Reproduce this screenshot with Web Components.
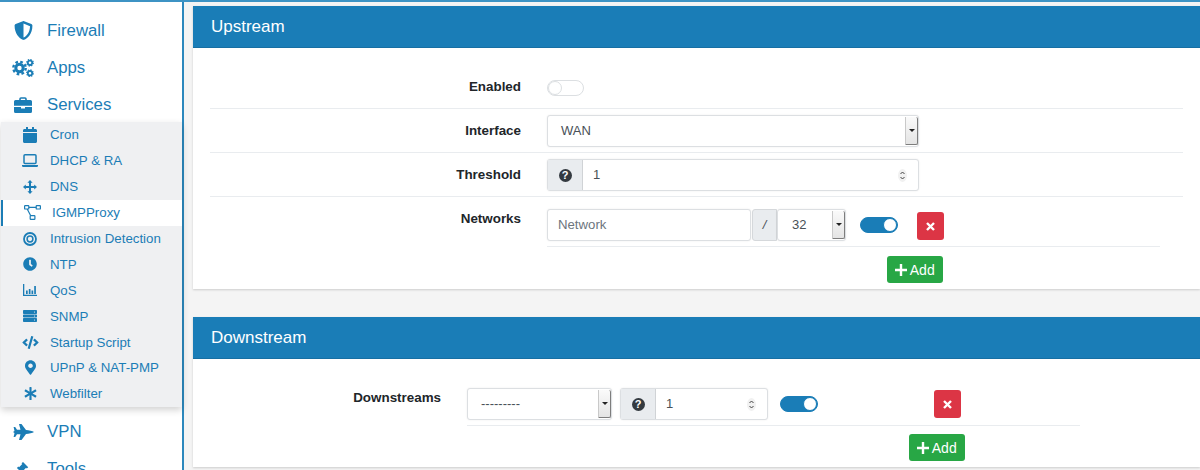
<!DOCTYPE html>
<html>
<head>
<meta charset="utf-8">
<title>IGMPProxy</title>
<style>
  html, body { margin: 0; height: 470px; overflow: hidden; background: #f4f4f4; }
  body { font-family: "Liberation Sans", Arial, sans-serif; color: #212529; }
</style>
</head>
<body>
<app-frame>
  <side-nav slot="side">
    <nav-item icon="shield" label="Firewall"></nav-item>
    <nav-item icon="cogs" label="Apps"></nav-item>
    <nav-item icon="briefcase" label="Services"></nav-item>
    <sub-menu>
      <sub-item icon="calendar" label="Cron"></sub-item>
      <sub-item icon="laptop" label="DHCP &amp; RA"></sub-item>
      <sub-item icon="arrows" label="DNS"></sub-item>
      <sub-item icon="diagram" label="IGMPProxy" active></sub-item>
      <sub-item icon="bullseye" label="Intrusion Detection"></sub-item>
      <sub-item icon="clock" label="NTP"></sub-item>
      <sub-item icon="chart" label="QoS"></sub-item>
      <sub-item icon="server" label="SNMP"></sub-item>
      <sub-item icon="code" label="Startup Script"></sub-item>
      <sub-item icon="marker" label="UPnP &amp; NAT-PMP"></sub-item>
      <sub-item icon="asterisk" label="Webfilter"></sub-item>
    </sub-menu>
    <nav-item icon="jet" label="VPN" style="margin-top:7px"></nav-item>
    <nav-item icon="gavel" label="Tools"></nav-item>
  </side-nav>

  <panel-card title="Upstream" style="--label:311px; height:283px">
    <form-row label="Enabled"><on-off style="width:37px; margin-top:0"></on-off></form-row>
    <form-row label="Interface"><select-box value="WAN" style="width:372px"></select-box></form-row>
    <form-row label="Threshold">
      <help-number value="1" style="width:372px"></help-number>
    </form-row>
    <form-row label="Networks" repeat style="--top:12px">
      <repeat-line>
        <text-box placeholder="Network" style="width:204px"></text-box>
        <slash-addon></slash-addon>
        <select-box value="32" pad="14" style="width:69px"></select-box>
        <on-off checked style="margin-left:14px"></on-off>
        <round-button kind="del" style="margin:3px 0 0 19px"></round-button>
      </repeat-line>
      <round-button kind="add" style="margin:9px 0 0 340px"></round-button>
    </form-row>
  </panel-card>

  <panel-card title="Downstream" style="--label:231px; height:150px; margin-top:28px">
    <form-row label="Downstreams" repeat>
      <repeat-line>
        <select-box value="---------" style="width:145px; font-size:13px"></select-box>
        <help-number value="1" style="width:148px; margin-left:8px"></help-number>
        <on-off checked style="margin-left:12px"></on-off>
        <round-button kind="del" style="margin:2px 0 0 116px"></round-button>
      </repeat-line>
      <round-button kind="add" style="margin:8px 0 0 442px"></round-button>
    </form-row>
  </panel-card>
</app-frame>

<script>
// font awesome style icons, drawn by hand where the path got too long
const ICONS = {
  shield: ['0 0 512 512', '<path d="M466.5 83.7l-192-80a48.15 48.15 0 0 0-36.9 0l-192 80C27.7 91.1 16 108.6 16 128c0 198.5 114.5 335.7 221.5 380.3 11.8 4.9 25.1 4.9 36.9 0C360.1 472.6 496 349.3 496 128c0-19.4-11.7-36.9-29.5-44.3zM256.1 446.3l-.1-381 175.9 73.3c-3.3 151.4-82.1 261.1-175.8 307.7z"/>'],
  cogs: ['0 0 22 18', '<g fill="none" stroke="currentColor"><circle cx="7.500" cy="9" r="3.700" stroke-width="3"/><circle cx="7.500" cy="9" r="6.200" stroke-width="2.400" stroke-dasharray="2.600 2.270"/><circle cx="18" cy="3.800" r="2.200" stroke-width="1.800"/><circle cx="18" cy="3.800" r="3.300" stroke-width="1.200" stroke-dasharray="1.300 1.290"/><circle cx="18" cy="14.200" r="2.200" stroke-width="1.800"/><circle cx="18" cy="14.200" r="3.300" stroke-width="1.200" stroke-dasharray="1.300 1.290"/></g>'],
  briefcase: ['0 0 18 16', '<path d="M6 3V2a1 1 0 0 1 1-1h4a1 1 0 0 1 1 1v1" fill="none" stroke="currentColor" stroke-width="1.600"/><path d="M1.500 3h15A1.500 1.500 0 0 1 18 4.500V8.700H0V4.500A1.500 1.500 0 0 1 1.500 3zM0 10h7v1.500h4V10h7v4.500a1.500 1.500 0 0 1-1.500 1.500h-15A1.500 1.500 0 0 1 0 14.500z"/>'],
  calendar: ['0 0 448 512', '<path d="M12 192h424c6.600 0 12 5.400 12 12v260c0 26.500-21.500 48-48 48H48c-26.500 0-48-21.500-48-48V204c0-6.600 5.400-12 12-12zm436-44v-36c0-26.500-21.500-48-48-48h-48V12c0-6.600-5.400-12-12-12h-40c-6.600 0-12 5.400-12 12v52H160V12c0-6.600-5.400-12-12-12h-40c-6.600 0-12 5.400-12 12v52H48C21.500 64 0 85.500 0 112v36c0 6.600 5.400 12 12 12h424c6.600 0 12-5.400 12-12z"/>'],
  laptop: ['0 0 16 13', '<rect x="2" y=".8" width="12" height="8.700" rx="1" fill="none" stroke="currentColor" stroke-width="1.500"/><path d="M0 11h16v.800a1.200 1.200 0 0 1-1.200 1.200H1.200A1.200 1.200 0 0 1 0 11.800z"/>'],
  arrows: ['0 0 14 14', '<path d="M7 0l2.600 2.800H8v3.200h3.200V4.400L14 7l-2.800 2.600V8H8v3.200h1.600L7 14l-2.600-2.800H6V8H2.800v1.600L0 7l2.800-2.600V6H6V2.800H4.400z"/>'],
  diagram: ['0 0 17 15', '<g fill="none" stroke="currentColor" stroke-width="1.200"><rect x=".6" y=".6" width="4.200" height="3.400" rx=".6"/><rect x="12.200" y=".6" width="4.200" height="3.400" rx=".6"/><rect x="6.200" y="10.600" width="4.700" height="3.700" rx=".6"/><path d="M4.800 2.300h7.400M3.200 4l3.400 6.600"/></g>'],
  bullseye: ['0 0 14 14', '<circle cx="7" cy="7" r="6" fill="none" stroke="currentColor" stroke-width="1.800"/><circle cx="7" cy="7" r="2.900" fill="none" stroke="currentColor" stroke-width="1.500"/>'],
  clock: ['0 0 512 512', '<path d="M256,8C119,8,8,119,8,256S119,504,256,504,504,393,504,256,393,8,256,8Zm92.490,313h0l-20,25a16,16,0,0,1-22.490,2.500h0l-67-49.720a40,40,0,0,1-15-31.230V112a16,16,0,0,1,16-16h32a16,16,0,0,1,16,16V256l58,42.500A16,16,0,0,1,348.490,321Z"/>'],
  chart: ['0 0 14 12', '<path d="M0 0h1.300v10.700H14V12H0z"/><path d="M3 6.500h1.700V10H3zM5.800 5h1.700v5H5.800zM8.500 6.500h1.700V10H8.500zM11.200 2h1.700v8h-1.700z"/>'],
  server: ['0 0 14 12', '<path fill-rule="evenodd" d="M.8 0h12.400a.8.8 0 0 1 .8.8v2.400a.8.8 0 0 1-.8.8H.8a.8.8 0 0 1-.8-.8V.8A.8.8 0 0 1 .8 0zm10.700 1.400a.6.600 0 1 0 0 1.200.6.600 0 0 0 0-1.200zM.8 4.400h12.400a.8.8 0 0 1 .8.8v1.600a.8.8 0 0 1-.8.8H.8a.8.8 0 0 1-.8-.8V5.200a.8.8 0 0 1 .8-.8zm10.700 1a.6.600 0 1 0 0 1.200.6.600 0 0 0 0-1.200zM.8 8h12.400a.8.8 0 0 1 .8.8v2.400a.8.8 0 0 1-.8.8H.8a.8.8 0 0 1-.8-.8V8.800A.8.8 0 0 1 .8 8zm10.700 1.400a.6.600 0 1 0 0 1.200.6.600 0 0 0 0-1.200z"/>'],
  code: ['0 0 640 512', '<path d="M278.900 511.500l-61-17.700c-6.400-1.800-10-8.500-8.200-14.900L346.200 8.700c1.800-6.400 8.500-10 14.900-8.200l61 17.700c6.400 1.800 10 8.500 8.200 14.900L293.800 503.300c-1.900 6.400-8.500 10.100-14.900 8.200zm-114-112.200l43.500-46.400c4.600-4.900 4.300-12.700-.8-17.200L117 256l90.600-79.700c5.100-4.500 5.500-12.300.8-17.200l-43.500-46.400c-4.500-4.800-12.100-5.100-17-.5L3.800 247.200c-5.100 4.700-5.100 12.800 0 17.500l144.100 135.100c4.900 4.600 12.500 4.400 17-.5zm327.200.6l144.100-135.100c5.100-4.700 5.100-12.800 0-17.500L492.100 112.100c-4.800-4.500-12.400-4.300-17 .5L431.600 159c-4.600 4.900-4.300 12.700.8 17.200L523 256l-90.600 79.700c-5.100 4.500-5.500 12.300-.8 17.200l43.500 46.400c4.500 4.900 12.100 5.100 17 .6z"/>'],
  marker: ['0 0 384 512', '<path d="M172.268 501.670C26.970 291.031 0 268.413 0 192 0 85.961 85.961 0 192 0s192 85.961 192 192c0 76.413-26.970 99.031-172.268 309.670-9.535 13.774-29.930 13.773-39.464 0zM192 272c44.183 0 80-35.817 80-80s-35.817-80-80-80-80 35.817-80 80 35.817 80 80 80z"/>'],
  asterisk: ['0 0 512 512', '<path d="M478.210 334.093L336 256l142.210-78.093c11.795-6.477 15.961-21.384 9.232-33.037l-19.480-33.741c-6.728-11.653-21.720-15.499-33.227-8.523L296 186.718l3.475-162.204C299.763 11.061 288.937 0 275.480 0h-38.960c-13.456 0-24.283 11.061-23.994 24.514L216 186.718 77.265 102.607c-11.506-6.976-26.499-3.130-33.227 8.523l-19.480 33.741c-6.728 11.653-2.562 26.560 9.233 33.037L176 256 33.790 334.093c-11.795 6.477-15.961 21.384-9.232 33.037l19.480 33.741c6.728 11.653 21.721 15.499 33.227 8.523L216 325.282l-3.475 162.204C212.237 500.939 223.064 512 236.520 512h38.961c13.456 0 24.283-11.061 23.995-24.514L296 325.282l138.735 84.111c11.506 6.976 26.499 3.130 33.227-8.523l19.480-33.741c6.728-11.653 2.563-26.559-9.232-33.036z"/>'],
  jet: ['0 0 21 16', '<path d="M21 8c-1.500-.9-5-1.700-8-2L8.500 0H6l1.500 5.800H4L2.200 3H.6l.9 3.900L0 8l1.500 1.100L.6 13h1.600L4 10.200h3.500L6 16h2.500L13 10c3-.3 6.500-1.100 8-2z"/>'],
  gavel: ['0 0 18 18', '<path d="M8.500 1l5.500 5.500-1.500 1.500-.8-.8-3.400 3.400.8.8-1.500 1.500L2 7.300l1.500-1.500.8.8 3.400-3.400-.8-.8zM10.300 9.800l1.800 1.800-4.800 5.200a1.500 1.500 0 0 1-2.200-2.100z"/><path d="M10 15h8v3h-8z"/>']
};

function iconSvg(name, w, h) {
  const [box, body] = ICONS[name];
  return `<svg viewBox="${box}" width="${w}" height="${h}" fill="currentColor" aria-hidden="true">${body}</svg>`;
}

class AppFrame extends HTMLElement {
  constructor() {
    super();
    this.attachShadow({ mode: 'open' }).innerHTML = `
      <style>
        :host { display: flex; height: 470px; border-top: 2px solid #3d93c4; box-sizing: border-box; overflow: hidden; }
        .side { flex: none; width: 182px; background: #fff; border-right: 2px solid #2c88bd; }
        .main { flex: 1; min-width: 0; padding: 4px 0 0 9px; }
      </style>
      <div class="side"><slot name="side"></slot></div>
      <div class="main"><slot></slot></div>`;
  }
}

class SideNav extends HTMLElement {
  constructor() {
    super();
    this.attachShadow({ mode: 'open' }).innerHTML = `
      <style>:host { display: block; padding-top: 10px; color: #1b7db6; }</style>
      <slot></slot>`;
  }
}

class NavItem extends HTMLElement {
  connectedCallback() {
    const size = { shield: [19, 19], cogs: [22, 18], briefcase: [18, 16], jet: [21, 16], gavel: [17, 17] }[this.getAttribute('icon')];
    this.attachShadow({ mode: 'open' }).innerHTML = `
      <style>
        :host { display: flex; align-items: center; height: 37px; font-size: 16.8px; }
        .i { flex: none; width: 47px; display: flex; justify-content: center; box-sizing: border-box; padding-right: 1px; }
      </style>
      <span class="i">${iconSvg(this.getAttribute('icon'), size[0], size[1])}</span>
      <span>${this.getAttribute('label').replace('&', '&amp;')}</span>`;
  }
}

class SubMenu extends HTMLElement {
  constructor() {
    super();
    this.attachShadow({ mode: 'open' }).innerHTML = `
      <style>
        :host { display: block; position: relative; margin: -1px 0 0 1px; background: #eff0f2; box-shadow: 0 3px 7px rgba(0,0,0,.18); }
      </style>
      <slot></slot>`;
  }
}

class SubItem extends HTMLElement {
  connectedCallback() {
    const size = { calendar: [14, 16], laptop: [16, 13], arrows: [14, 14], diagram: [17, 15], bullseye: [14, 14], clock: [14, 14], chart: [14, 12], server: [14, 12], code: [17, 13], marker: [11, 15], asterisk: [13, 13] }[this.getAttribute('icon')];
    this.attachShadow({ mode: 'open' }).innerHTML = `
      <style>
        :host { display: flex; align-items: center; height: 25.9px; font-size: 13.3px; box-sizing: border-box; }
        :host([active]) { background: #fff; border-left: 2px solid #1b7db6; }
        .i { flex: none; width: 49px; padding: 0 10px 0 19px; box-sizing: border-box; display: flex; justify-content: center; }
      </style>
      <span class="i">${iconSvg(this.getAttribute('icon'), size[0], size[1])}</span>
      <span>${this.getAttribute('label').replace('&', '&amp;')}</span>`;
  }
}

class PanelCard extends HTMLElement {
  connectedCallback() {
    this.attachShadow({ mode: 'open' }).innerHTML = `
      <style>
        :host { display: block; box-sizing: border-box; background: #fff; box-shadow: 0 1px 2px rgba(0,0,0,.16); }
        header { height: 42px; padding-left: 18px; background: #1a7db7; color: #fff; font-size: 17px; line-height: 41px; border-bottom: 1px solid #176fa3; box-sizing: border-box; }
        .body { padding: 16px 17px 0; }
      </style>
      <header>${this.getAttribute('title')}</header>
      <div class="body"><slot></slot></div>`;
    this.removeAttribute('title');
  }
}

class FormRow extends HTMLElement {
  connectedCallback() {
    this.attachShadow({ mode: 'open' }).innerHTML = `
      <style>
        :host { display: grid; grid-template-columns: var(--label) 1fr; column-gap: 26px; min-height: 44px; box-sizing: border-box; padding: 6px 0 4px; border-bottom: 1px solid #e9ecef; }
        :host([repeat]) { border-bottom: 0; padding-top: var(--top, 13px); }
        :host(:first-child:not([repeat])) { padding-top: 0; min-height: 45px; }
        .l { font-size: 13.4px; font-weight: bold; text-align: right; color: #212529; line-height: 16px; margin-top: 8px; }
        :host([repeat]) .l { margin-top: 2px; }
        .c { display: block; min-width: 0; }
        :host(:first-child:not([repeat])) .c { padding-top: 16px; }
        :host(:first-child:not([repeat])) .l { margin-top: 15px; }
      </style>
      <div class="l">${this.getAttribute('label')}</div>
      <div class="c"><slot></slot></div>`;
  }
}

class RepeatLine extends HTMLElement {
  constructor() {
    super();
    this.attachShadow({ mode: 'open' }).innerHTML = `
      <style>:host { display: flex; align-items: flex-start; width: 613px; height: 38px; box-sizing: border-box; border-bottom: 1px solid #e9ecef; }</style>
      <slot></slot>`;
  }
}

class TextBox extends HTMLElement {
  connectedCallback() {
    this.attachShadow({ mode: 'open' }).innerHTML = `
      <style>
        :host { display: block; height: 32px; box-sizing: border-box; flex: none; border: 1px solid #dcdfe2; border-radius: 3px; padding: 0 10px; font-size: 13.2px; line-height: 30px; color: #6c757d; background: #fff; box-shadow: 0 0 2px rgba(0,0,0,.08); }
      </style>${this.getAttribute('placeholder')}`;
  }
}

class SlashAddon extends HTMLElement {
  constructor() {
    super();
    this.attachShadow({ mode: 'open' }).innerHTML = `
      <style>
        :host { display: block; flex: none; width: 25px; height: 32px; box-sizing: border-box; margin-left: 1px; background: #e9ecef; border: 1px solid #d5d8db; border-radius: 3px 0 0 3px; text-align: center; font-size: 13px; line-height: 30px; font-style: italic; color: #495057; }
      </style>/`;
  }
}

class SelectBox extends HTMLElement {
  connectedCallback() {
    const pad = this.getAttribute('pad') || 13;
    this.attachShadow({ mode: 'open' }).innerHTML = `
      <style>
        :host { display: flex; flex: none; height: 32px; box-sizing: border-box; border: 1px solid #dcdfe2; border-radius: 3px; background: #fff; box-shadow: 0 0 2px rgba(0,0,0,.08); font-size: 13px; color: #495057; }
        .v { flex: 1; padding-left: ${pad}px; line-height: 30px; }
        .b { flex: none; width: 11px; margin: 1px 0; background: linear-gradient(#fafafa, #e4e4e4); border-left: 1px solid #c9c9c9; border-right: 1px solid #7d7d7d; border-bottom: 1px solid #7d7d7d; border-radius: 0 2px 2px 0; display: flex; align-items: center; justify-content: center; }
        .b i { width: 0; height: 0; border: 3px solid transparent; border-top: 3px solid #222; border-bottom: 0; }
      </style>
      <span class="v">${this.getAttribute('value')}</span><span class="b"><i></i></span>`;
  }
}

class HelpNumber extends HTMLElement {
  connectedCallback() {
    this.attachShadow({ mode: 'open' }).innerHTML = `
      <style>
        :host { display: flex; flex: none; height: 32px; box-sizing: border-box; border: 1px solid #dcdfe2; border-radius: 3px; background: #fff; box-shadow: 0 0 2px rgba(0,0,0,.08); font-size: 13px; color: #495057; }
        .h { flex: none; width: 34px; background: #e9ecef; border-right: 1px solid #d0d3d6; display: flex; align-items: center; justify-content: center; }
        .q { width: 13px; height: 13px; border-radius: 50%; background: #343a40; color: #fff; font-size: 11px; font-weight: bold; line-height: 13px; text-align: center; }
        .v { flex: 1; padding-left: 10px; line-height: 30px; }
        .s { flex: none; align-self: center; width: 9px; height: 13px; margin-right: 11px; border-radius: 50%; background: #f1f1f1; display: flex; }
      </style>
      <span class="h"><span class="q">?</span></span>
      <span class="v">${this.getAttribute('value')}</span>
      <span class="s"><svg viewBox="0 0 9 13" width="9" height="13" fill="none" stroke="#444" stroke-width="1"><path d="M2.500 5l2-2 2 2M2.500 8l2 2 2-2"/></svg></span>`;
  }
}

class OnOff extends HTMLElement {
  constructor() {
    super();
    this.attachShadow({ mode: 'open' }).innerHTML = `
      <style>
        :host { display: block; flex: none; position: relative; width: 38px; height: 16px; margin-top: 8px; box-sizing: border-box; border-radius: 8px; background: #fff; border: 1px solid #dcdfe2; }
        :host([checked]) { background: #1a7db7; border-color: #1a7db7; }
        i { position: absolute; left: 0; top: 0; width: 14px; height: 14px; box-sizing: border-box; border-radius: 50%; background: #fff; border: 1px solid #dcdfe2; }
        :host([checked]) i { left: auto; right: 0; border-color: #1a7db7; }
      </style><i></i>`;
  }
}

class RoundButton extends HTMLElement {
  connectedCallback() {
    const add = this.getAttribute('kind') === 'add';
    this.attachShadow({ mode: 'open' }).innerHTML = `
      <style>
        :host { display: flex; align-items: center; justify-content: center; flex: none; box-sizing: border-box; border-radius: 3px; color: #fff; font-size: 14px; gap: 2.5px; }
        :host([kind=add]) { width: 56px; height: 27px; background: #28a745; }
        :host([kind=del]) { width: 27px; height: 28px; background: #dc3545; }
      </style>
      ${add
        ? `<svg width="12" height="12" viewBox="0 0 12 12"><path d="M6 0v12M0 6h12" stroke="#fff" stroke-width="2.400"/></svg><span>Add</span>`
        : `<svg width="9" height="9" viewBox="0 0 9 9"><path d="M1 1l7 7M8 1l-7 7" stroke="#fff" stroke-width="2.400"/></svg>`}`;
  }
}

customElements.define('app-frame', AppFrame);
customElements.define('side-nav', SideNav);
customElements.define('nav-item', NavItem);
customElements.define('sub-menu', SubMenu);
customElements.define('sub-item', SubItem);
customElements.define('panel-card', PanelCard);
customElements.define('form-row', FormRow);
customElements.define('repeat-line', RepeatLine);
customElements.define('text-box', TextBox);
customElements.define('slash-addon', SlashAddon);
customElements.define('select-box', SelectBox);
customElements.define('help-number', HelpNumber);
customElements.define('on-off', OnOff);
customElements.define('round-button', RoundButton);
</script>
</body>
</html>
